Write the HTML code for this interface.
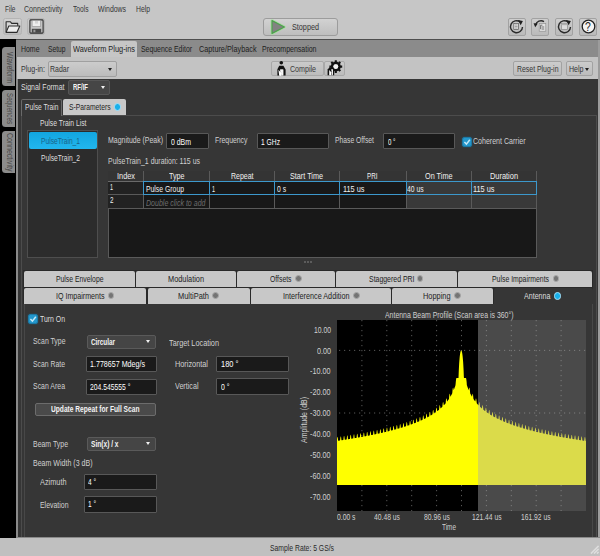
<!DOCTYPE html>
<html lang="en"><head><meta charset="utf-8"><title>Radar Plug-in</title>
<style>
html,body{margin:0;padding:0;background:#c6c6c6;}
body{width:600px;height:556px;position:relative;overflow:hidden;font-family:"Liberation Sans", sans-serif;}
.b{position:absolute;display:block;}
.t{position:absolute;white-space:nowrap;line-height:1;transform-origin:0 0;}
.arr{width:0;height:0;border-style:solid;border-width:3.2px 2.8px 0 2.8px;border-color:transparent;}
</style></head>
<body>
<div class="b" style="left:0px;top:0px;width:600px;height:39px;background:#c6c6c6;"></div>
<div class="b" style="left:0px;top:38.8px;width:16px;height:500.2px;background:#000;"></div>
<div class="b" style="left:16px;top:39px;width:584px;height:498.5px;background:#8a8a8a;"></div>
<div class="b" style="left:16px;top:38.8px;width:584px;height:1.4px;background:#4e4e4e;"></div>
<div class="b" style="left:16px;top:40px;width:582.5px;height:16.5px;background:#8b8b8b;border-radius:3px 0 0 0;"></div>
<div class="b" style="left:16.5px;top:56.5px;width:582px;height:22px;background:#c3c3c3;"></div>
<div class="b" style="left:17.8px;top:78.5px;width:580.4px;height:458.3px;background:#363636;"></div>
<div class="b" style="left:0px;top:537.5px;width:600px;height:18.5px;background:#c0c0c0;"></div>
<svg class="b" style="left:590px;top:545px" width="9" height="9" viewBox="0 0 9 9"><path d="M8.5 1L1 8.5M8.5 4L4 8.5M8.5 7L7 8.5" stroke="#dcdcdc" stroke-width="1.2"/></svg>
<div class="b" style="left:598.2px;top:40px;width:1.8px;height:497px;background:#9c9c9c;"></div>
<div class="b" style="left:3px;top:17.5px;width:18.5px;height:17.5px;background:linear-gradient(#d0d0d0,#bcbcbc);border:1px solid #b4b4b4;border-radius:2.5px;box-sizing:border-box;"></div>
<div class="b" style="left:27px;top:17.5px;width:18px;height:17.5px;background:linear-gradient(#d0d0d0,#bcbcbc);border:1px solid #b4b4b4;border-radius:2.5px;box-sizing:border-box;"></div>
<svg class="b" style="left:4.5px;top:19.5px" width="16" height="14" viewBox="0 0 16 14"><path d="M1.1 12V1.8h4.4l1.2 1.6h6v2.4" fill="#d6d6d6" stroke="#2c2c2c" stroke-width="1.1" stroke-linejoin="round"/><path d="M1.1 12.4l2.7-6.4h11l-2.9 6.4z" fill="#ececec" stroke="#2c2c2c" stroke-width="1.1" stroke-linejoin="round"/></svg>
<svg class="b" style="left:28.5px;top:19px" width="15" height="15" viewBox="0 0 15 15"><rect x="0.9" y="0.9" width="13.2" height="13.2" rx="0.8" fill="#c4c4c4" stroke="#2e2e2e" stroke-width="1.1"/><rect x="3.1" y="1.4" width="8.6" height="6.2" fill="#ededed" stroke="#8a8a8a" stroke-width="0.6"/><rect x="6" y="2" width="3" height="2.6" fill="#d4d4d4"/><rect x="2.8" y="9.8" width="9.4" height="4" fill="#4a4a4a"/><rect x="4.4" y="10.8" width="2" height="2.4" fill="#9a9a9a"/></svg>
<div class="b" style="left:263px;top:17.5px;width:75px;height:18px;background:linear-gradient(#d2d2d2,#bebebe);border:1px solid #9c9c9c;border-radius:3px;box-sizing:border-box;"></div>
<svg class="b" style="left:269px;top:19px" width="18" height="16" viewBox="0 0 18 16"><path d="M3 1.6L15.4 8L3 14.4z" fill="none" stroke="#a4e09c" stroke-width="3" stroke-linejoin="round" opacity="0.75"/><path d="M3 1.6L15.4 8L3 14.4z" fill="#828282" stroke="#4ea04e" stroke-width="1.2" stroke-linejoin="round"/></svg>
<div class="b" style="left:507.5px;top:17.5px;width:18px;height:18px;background:linear-gradient(#cecece,#bababa);border:1px solid #a2a2a2;border-radius:2px;box-sizing:border-box;"></div>
<svg class="b" style="left:509px;top:19px" width="15" height="15" viewBox="0 0 15 15"><path d="M11.1 2.9A6 6 0 1 0 13.5 7.9" fill="none" stroke="#2a2a2a" stroke-width="1.4"/><path d="M8.9 0.9l5 1.1-2.2 4.2z" fill="#1e1e1e"/><rect x="4.8" y="4.4" width="4.8" height="6.2" fill="#e6e6e6" stroke="#555" stroke-width="0.7"/><path d="M5.8 6h2.8M5.8 7.5h2.8M5.8 9h2.8" stroke="#777" stroke-width="0.6"/></svg>
<div class="b" style="left:531px;top:17.5px;width:18px;height:18px;background:linear-gradient(#cecece,#bababa);border:1px solid #a2a2a2;border-radius:2px;box-sizing:border-box;"></div>
<svg class="b" style="left:532.5px;top:19px" width="15" height="15" viewBox="0 0 15 15"><path d="M2.6 6.2A5.6 5.6 0 0 1 11 2.6" fill="none" stroke="#2a2a2a" stroke-width="1.4"/><path d="M0.6 4.2l4.2 0.4-2.6 3.6z" fill="#1e1e1e"/><rect x="6.2" y="4.6" width="6.6" height="7.6" fill="#e2e2e2" stroke="#8a8a8a" stroke-width="0.6"/><path d="M7.4 6.2h2M8.6 8h2.6M8.6 10h2.6M7.6 6.4v3.8" stroke="#444" stroke-width="0.7" fill="none"/></svg>
<div class="b" style="left:555px;top:17.5px;width:18px;height:18px;background:linear-gradient(#cecece,#bababa);border:1px solid #a2a2a2;border-radius:2px;box-sizing:border-box;"></div>
<svg class="b" style="left:556.5px;top:19px" width="15" height="15" viewBox="0 0 15 15"><path d="M11.1 2.9A6 6 0 1 0 13.5 7.9" fill="none" stroke="#2a2a2a" stroke-width="1.4"/><path d="M8.9 0.9l5 1.1-2.2 4.2z" fill="#1e1e1e"/><rect x="4.4" y="4.6" width="6" height="6" fill="#dcdcdc" stroke="#8a8a8a" stroke-width="0.7"/><rect x="4.4" y="4.6" width="6" height="1.6" fill="#b0b0b0"/></svg>
<div class="b" style="left:579px;top:17.5px;width:18px;height:18px;background:linear-gradient(#cecece,#bababa);border:1px solid #a2a2a2;border-radius:2px;box-sizing:border-box;"></div>
<svg class="b" style="left:580.5px;top:19px" width="15" height="15" viewBox="0 0 15 15"><circle cx="7.5" cy="7.5" r="6.3" fill="#f4f4f4" stroke="#222" stroke-width="1.3"/></svg>
<div class="b" style="left:71px;top:41px;width:66px;height:15.5px;background:#c6c6c6;border-radius:2px 2px 0 0;"></div>
<div class="b" style="left:47.5px;top:61px;width:69.5px;height:15.5px;background:linear-gradient(#cccccc,#bcbcbc);border:1px solid #a0a0a0;border-radius:2px;box-sizing:border-box;"></div>
<div class="b arr" style="left:107.5px;top:67.5px;border-top-color:#222"></div>
<div class="b" style="left:271px;top:60.5px;width:52.5px;height:15px;background:linear-gradient(#cacaca,#bcbcbc);border:1px solid #a8a8a8;border-radius:2px;box-sizing:border-box;"></div>
<div class="b" style="left:324px;top:60.5px;width:21px;height:15px;background:linear-gradient(#cacaca,#bcbcbc);border:1px solid #a8a8a8;border-radius:2px;box-sizing:border-box;"></div>
<svg class="b" style="left:275px;top:60px" width="13" height="16" viewBox="0 0 13 16"><circle cx="6.3" cy="2.7" r="1.8" fill="#111"/><path d="M2.4 15.4V9.2l1.8-3.4h4.2l2.2 3.6v6H8.4V9.4H5v6z" fill="#111"/><path d="M3.4 9.8l4.2 4.6-1.8 0.2 0.8 1.2H4.2z" fill="#fff"/><path d="M5.2 9.4h3v5.8h-1z" fill="#f4f4f4"/></svg>
<svg class="b" style="left:326px;top:60px" width="18" height="16" viewBox="0 0 18 16"><g transform="translate(9.8,6.6)"><circle r="3.7" fill="none" stroke="#111" stroke-width="2.5"/><g stroke="#111" stroke-width="2.1"><path d="M0-6.4V-4M0 6.4V4M-6.4 0H-4M6.4 0H4M-4.5-4.5L-2.9-2.9M4.5 4.5L2.9 2.9M-4.5 4.5L-2.9 2.9M4.5-4.5L2.9-2.9"/></g><circle r="2.4" fill="#f2f2f2"/></g><path d="M1.6 15.2V9.6l2-2.4 3.4 0.6 1.2 2.6v4.8z" fill="#111"/><path d="M3.2 15.2V10l3 3.2-1.2 0.2 0.8 1.8z" fill="#fff"/><path d="M5.2 9.2h1.8v6h-0.8z" fill="#eee"/></svg>
<div class="b" style="left:513px;top:61px;width:48.5px;height:15px;background:linear-gradient(#cccccc,#bcbcbc);border:1px solid #a2a2a2;border-radius:2px;box-sizing:border-box;"></div>
<div class="b" style="left:565.5px;top:61px;width:27px;height:15px;background:linear-gradient(#cccccc,#bcbcbc);border:1px solid #a2a2a2;border-radius:2px;box-sizing:border-box;"></div>
<div class="b arr" style="left:584.5px;top:67.5px;border-top-color:#222;border-width:3.4px 2.6px 0 2.6px"></div>
<div class="b" style="left:1.5px;top:47px;width:13px;height:38.7px;background:#8c8c8c;border-radius:3.5px 0 0 3.5px;"></div>
<div class="b" style="left:1.5px;top:90px;width:13px;height:36.7px;background:#8c8c8c;border-radius:3.5px 0 0 3.5px;"></div>
<div class="b" style="left:1.5px;top:130.6px;width:13px;height:42.2px;background:#8c8c8c;border-radius:3.5px 0 0 3.5px;"></div>
<div class="b" style="left:68px;top:79.5px;width:42px;height:15px;background:#464646;border:1px solid #565656;border-radius:2px;box-sizing:border-box;"></div>
<div class="b arr" style="left:100.5px;top:85.5px;border-top-color:#f0f0f0"></div>
<div class="b" style="left:20.5px;top:114.5px;width:576px;height:422.5px;border:1px solid #4c4c4c;box-sizing:border-box;border-bottom:none;"></div>
<div class="b" style="left:21px;top:99px;width:40.5px;height:16.5px;background:#363636;border:1px solid #6a6a6a;box-sizing:border-box;border-bottom:none;border-radius:2px 2px 0 0;"></div>
<div class="b" style="left:63px;top:99px;width:63px;height:15.5px;background:#c8c8c8;border-radius:2px 2px 0 0;"></div>
<div class="b" style="left:113.7px;top:103.2px;width:7.8px;height:7.8px;background:#19b0ea;border:1.2px solid #a8e0f8;border-radius:4px;box-sizing:border-box;"></div>
<div class="b" style="left:27.3px;top:129.5px;width:71px;height:128px;background:#2c2c2c;border:1px solid #4e4e4e;box-sizing:border-box;"></div>
<div class="b" style="left:28.5px;top:132px;width:68.5px;height:16.5px;background:linear-gradient(#12a6e0,#22b6ee);border-radius:2px;"></div>
<div class="b" style="left:166px;top:132.5px;width:42.5px;height:16.5px;background:#1a1a1a;border:1px solid #585858;border-radius:1px;box-sizing:border-box;"></div>
<div class="b" style="left:256.5px;top:132.5px;width:72.5px;height:16.5px;background:#1a1a1a;border:1px solid #585858;border-radius:1px;box-sizing:border-box;"></div>
<div class="b" style="left:383px;top:132.5px;width:71.5px;height:16.5px;background:#1a1a1a;border:1px solid #585858;border-radius:1px;box-sizing:border-box;"></div>
<div class="b" style="left:461.5px;top:136.5px;width:10.5px;height:10px;background:#2397cc;border:1px solid #1c7aa6;border-radius:2.5px;box-sizing:border-box;box-shadow:0 0 1.5px #1a6a90;"></div>
<svg class="b" style="left:462px;top:136.5px" width="10" height="10" viewBox="0 0 10 10"><path d="M2.4 5l2 2.1L7.8 2.8" fill="none" stroke="#c4e9f8" stroke-width="1.5"/></svg>
<div class="b" style="left:107.5px;top:170.5px;width:429px;height:87px;background:#181818;border:1px solid #5a5a5a;box-sizing:border-box;"></div>
<div class="b" style="left:108px;top:171px;width:428px;height:10px;background:#343434;"></div>
<div class="b" style="left:406px;top:181px;width:130px;height:26.5px;background:#393939;"></div>
<div class="b" style="left:108px;top:181px;width:35.5px;height:26.5px;background:#222222;"></div>
<div class="b" style="left:107.5px;top:207.5px;width:429px;height:1px;background:#5a5a5a;"></div>
<div class="b" style="left:107.5px;top:180.5px;width:429px;height:1px;background:#6a6a6a;"></div>
<div class="b" style="left:107.5px;top:193.5px;width:429px;height:1px;background:#5a5a5a;"></div>
<div class="b" style="left:143px;top:171px;width:1px;height:37px;background:#5a5a5a;"></div>
<div class="b" style="left:208.5px;top:171px;width:1px;height:37px;background:#5a5a5a;"></div>
<div class="b" style="left:274px;top:171px;width:1px;height:37px;background:#5a5a5a;"></div>
<div class="b" style="left:338.5px;top:171px;width:1px;height:37px;background:#5a5a5a;"></div>
<div class="b" style="left:405.5px;top:171px;width:1px;height:37px;background:#5a5a5a;"></div>
<div class="b" style="left:471px;top:171px;width:1px;height:37px;background:#5a5a5a;"></div>
<div class="b" style="left:143px;top:180.5px;width:66.5px;height:14px;border:1px solid #3c98cc;box-sizing:border-box;"></div>
<div class="b" style="left:208.5px;top:180.5px;width:66.5px;height:14px;border:1px solid #3c98cc;box-sizing:border-box;"></div>
<div class="b" style="left:274px;top:180.5px;width:65.5px;height:14px;border:1px solid #3c98cc;box-sizing:border-box;"></div>
<div class="b" style="left:338.5px;top:180.5px;width:68px;height:14px;border:1px solid #3c98cc;box-sizing:border-box;"></div>
<div class="b" style="left:405.5px;top:180.5px;width:66.5px;height:14px;border:1px solid #3c98cc;box-sizing:border-box;"></div>
<div class="b" style="left:471px;top:180.5px;width:66px;height:14px;border:1px solid #3c98cc;box-sizing:border-box;"></div>
<div class="b" style="left:304.3px;top:261.3px;width:1.4px;height:1.4px;background:#6a6a6a;border-radius:1px;"></div>
<div class="b" style="left:307.3px;top:261.3px;width:1.4px;height:1.4px;background:#6a6a6a;border-radius:1px;"></div>
<div class="b" style="left:310.3px;top:261.3px;width:1.4px;height:1.4px;background:#6a6a6a;border-radius:1px;"></div>
<div class="b" style="left:23px;top:270px;width:570px;height:34px;background:#2a2a2a;"></div>
<div class="b" style="left:24px;top:270.7px;width:110.5px;height:16.3px;background:#c8c8c8;border-radius:2px 2px 0 0;"></div>
<div class="b" style="left:136px;top:270.7px;width:99.5px;height:16.3px;background:#c8c8c8;border-radius:2px 2px 0 0;"></div>
<div class="b" style="left:237px;top:270.7px;width:97.5px;height:16.3px;background:#c8c8c8;border-radius:2px 2px 0 0;"></div>
<div class="b" style="left:294.9px;top:275.2px;width:6.8px;height:6.8px;background:#747474;border:1px solid #a8a8a8;border-radius:4px;box-sizing:border-box;"></div>
<div class="b" style="left:336px;top:270.7px;width:120.5px;height:16.3px;background:#c8c8c8;border-radius:2px 2px 0 0;"></div>
<div class="b" style="left:416.6px;top:275.2px;width:6.8px;height:6.8px;background:#747474;border:1px solid #a8a8a8;border-radius:4px;box-sizing:border-box;"></div>
<div class="b" style="left:458px;top:270.7px;width:134px;height:16.3px;background:#c8c8c8;border-radius:2px 2px 0 0;"></div>
<div class="b" style="left:552.6px;top:275.2px;width:6.8px;height:6.8px;background:#747474;border:1px solid #a8a8a8;border-radius:4px;box-sizing:border-box;"></div>
<div class="b" style="left:24px;top:288px;width:122px;height:15.7px;background:#c8c8c8;border-radius:2px 2px 0 0;"></div>
<div class="b" style="left:107.6px;top:292.3px;width:6.8px;height:6.8px;background:#747474;border:1px solid #a8a8a8;border-radius:4px;box-sizing:border-box;"></div>
<div class="b" style="left:147.5px;top:288px;width:102px;height:15.7px;background:#c8c8c8;border-radius:2px 2px 0 0;"></div>
<div class="b" style="left:212.3px;top:292.3px;width:6.8px;height:6.8px;background:#747474;border:1px solid #a8a8a8;border-radius:4px;box-sizing:border-box;"></div>
<div class="b" style="left:251px;top:288px;width:139.5px;height:15.7px;background:#c8c8c8;border-radius:2px 2px 0 0;"></div>
<div class="b" style="left:353.1px;top:292.3px;width:6.8px;height:6.8px;background:#747474;border:1px solid #a8a8a8;border-radius:4px;box-sizing:border-box;"></div>
<div class="b" style="left:392px;top:288px;width:101px;height:15.7px;background:#c8c8c8;border-radius:2px 2px 0 0;"></div>
<div class="b" style="left:454.1px;top:292.3px;width:6.8px;height:6.8px;background:#747474;border:1px solid #a8a8a8;border-radius:4px;box-sizing:border-box;"></div>
<div class="b" style="left:493.5px;top:288px;width:99px;height:17px;background:#363636;border-radius:2px 2px 0 0;"></div>
<div class="b" style="left:553.7px;top:292.2px;width:7.8px;height:7.8px;background:#19b0ea;border:1.2px solid #a8e0f8;border-radius:4px;box-sizing:border-box;"></div>
<div class="b" style="left:24px;top:304px;width:1px;height:232.8px;background:#484848;"></div>
<div class="b" style="left:591.5px;top:304px;width:1.2px;height:232.8px;background:#484848;"></div>
<div class="b" style="left:27.5px;top:313.5px;width:10.5px;height:10px;background:#2397cc;border:1px solid #1c7aa6;border-radius:2.5px;box-sizing:border-box;box-shadow:0 0 1.5px #1a6a90;"></div>
<svg class="b" style="left:28px;top:313.5px" width="10" height="10" viewBox="0 0 10 10"><path d="M2.4 5l2 2.1L7.8 2.8" fill="none" stroke="#c4e9f8" stroke-width="1.5"/></svg>
<div class="b" style="left:86.5px;top:334.5px;width:69.5px;height:14px;background:#454545;border:1px solid #5a5a5a;border-radius:2px;box-sizing:border-box;"></div>
<div class="b arr" style="left:146px;top:340.3px;border-top-color:#f0f0f0"></div>
<div class="b" style="left:86px;top:356px;width:70.5px;height:15.5px;background:#1a1a1a;border:1px solid #585858;border-radius:1px;box-sizing:border-box;"></div>
<div class="b" style="left:86px;top:378.5px;width:70.5px;height:16px;background:#1a1a1a;border:1px solid #585858;border-radius:1px;box-sizing:border-box;"></div>
<div class="b" style="left:35px;top:403px;width:121px;height:13px;background:#4a4a4a;border:1px solid #6c6c6c;border-radius:2px;box-sizing:border-box;"></div>
<div class="b" style="left:86.5px;top:436.5px;width:69.5px;height:14px;background:#454545;border:1px solid #5a5a5a;border-radius:2px;box-sizing:border-box;"></div>
<div class="b arr" style="left:146px;top:442.3px;border-top-color:#f0f0f0"></div>
<div class="b" style="left:84px;top:473.5px;width:72.5px;height:16px;background:#1a1a1a;border:1px solid #585858;border-radius:1px;box-sizing:border-box;"></div>
<div class="b" style="left:84px;top:495.5px;width:72.5px;height:17px;background:#1a1a1a;border:1px solid #585858;border-radius:1px;box-sizing:border-box;"></div>
<div class="b" style="left:216px;top:355.5px;width:73px;height:16.5px;background:#1a1a1a;border:1px solid #585858;border-radius:1px;box-sizing:border-box;"></div>
<div class="b" style="left:216px;top:378px;width:73px;height:16.5px;background:#1a1a1a;border:1px solid #585858;border-radius:1px;box-sizing:border-box;"></div>
<svg class="b" style="left:337px;top:320.4px" width="249" height="191.10000000000002" viewBox="337 320.4 249 191.10000000000002"><rect x="337" y="320.4" width="249" height="191.10000000000002" fill="#000"/><path d="M361.90 320.4V511.5M386.80 320.4V511.5M411.70 320.4V511.5M436.60 320.4V511.5M461.50 320.4V511.5M486.40 320.4V511.5M511.30 320.4V511.5M536.20 320.4V511.5M561.10 320.4V511.5M339 350.80H586M339 413.41H586M339 476.02H586" stroke="#585858" stroke-width="1" stroke-dasharray="1.2 3.8" fill="none"/><polygon points="337,485.3 337.00,439.03 337.17,437.96 337.33,437.38 337.50,437.26 337.67,437.61 337.83,438.43 338.00,439.78 338.17,441.19 338.33,441.17 338.50,441.14 338.67,441.12 338.83,441.09 339.00,441.07 339.17,441.04 339.33,441.02 339.50,440.99 339.67,440.97 339.83,440.94 340.00,440.92 340.17,439.80 340.33,438.29 340.50,437.32 340.67,436.83 340.83,436.81 341.00,437.24 341.17,438.16 341.33,439.63 341.50,440.69 341.67,440.67 341.83,440.64 342.00,440.62 342.17,440.59 342.33,440.57 342.50,440.54 342.67,440.52 342.83,440.49 343.00,440.46 343.17,440.44 343.33,440.41 343.50,438.95 343.67,437.55 343.83,436.68 344.00,436.29 344.17,436.35 344.33,436.88 344.50,437.90 344.67,439.48 344.83,440.18 345.00,440.15 345.17,440.13 345.33,440.10 345.50,440.08 345.67,440.05 345.83,440.02 346.00,440.00 346.17,439.97 346.33,439.95 346.50,439.92 346.67,439.89 346.83,438.11 347.00,436.82 347.17,436.05 347.33,435.74 347.50,435.90 347.67,436.53 347.83,437.65 348.00,439.35 348.17,439.65 348.33,439.63 348.50,439.60 348.67,439.57 348.83,439.55 349.00,439.52 349.17,439.49 349.33,439.47 349.50,439.44 349.67,439.41 349.83,439.38 350.00,439.03 350.17,437.28 350.33,436.09 350.50,435.42 350.67,435.21 350.83,435.45 351.00,436.17 351.17,437.41 351.33,439.14 351.50,439.11 351.67,439.08 351.83,439.06 352.00,439.03 352.17,439.00 352.33,438.97 352.50,438.95 352.67,438.92 352.83,438.89 353.00,438.86 353.17,438.83 353.33,438.08 353.50,436.45 353.67,435.37 353.83,434.79 354.00,434.67 354.17,435.01 354.33,435.83 354.50,437.17 354.67,438.58 354.83,438.55 355.00,438.52 355.17,438.50 355.33,438.47 355.50,438.44 355.67,438.41 355.83,438.38 356.00,438.35 356.17,438.32 356.33,438.29 356.50,438.27 356.67,437.14 356.83,435.63 357.00,434.65 357.17,434.16 357.33,434.13 357.50,434.57 357.67,435.48 357.83,436.94 358.00,438.00 358.17,437.97 358.33,437.95 358.50,437.92 358.67,437.89 358.83,437.86 359.00,437.83 359.17,437.80 359.33,437.77 359.50,437.74 359.67,437.71 359.83,437.68 360.00,436.21 360.17,434.81 360.33,433.93 360.50,433.54 360.67,433.60 360.83,434.12 361.00,435.14 361.17,436.72 361.33,437.41 361.50,437.38 361.67,437.35 361.83,437.32 362.00,437.29 362.17,437.26 362.33,437.23 362.50,437.20 362.67,437.17 362.83,437.13 363.00,437.10 363.17,437.07 363.33,435.28 363.50,433.99 363.67,433.21 363.83,432.91 364.00,433.06 364.17,433.68 364.33,434.80 364.50,436.50 364.67,436.79 364.83,436.76 365.00,436.73 365.17,436.70 365.33,436.67 365.50,436.64 365.67,436.60 365.83,436.57 366.00,436.54 366.17,436.51 366.33,436.48 366.50,436.12 366.67,434.36 366.83,433.17 367.00,432.49 367.17,432.28 367.33,432.52 367.50,433.23 367.67,434.46 367.83,436.19 368.00,436.16 368.17,436.12 368.33,436.09 368.50,436.06 368.67,436.03 368.83,435.99 369.00,435.96 369.17,435.93 369.33,435.90 369.50,435.86 369.67,435.83 369.83,435.07 370.00,433.44 370.17,432.35 370.33,431.76 370.50,431.64 370.67,431.97 370.83,432.79 371.00,434.13 371.17,435.53 371.33,435.50 371.50,435.46 371.67,435.43 371.83,435.40 372.00,435.36 372.17,435.33 372.33,435.29 372.50,435.26 372.67,435.23 372.83,435.19 373.00,435.16 373.17,434.03 373.33,432.51 373.50,431.53 373.67,431.03 373.83,431.00 374.00,431.42 374.17,432.34 374.33,433.79 374.50,434.85 374.67,434.81 374.83,434.78 375.00,434.74 375.17,434.71 375.33,434.67 375.50,434.64 375.67,434.60 375.83,434.57 376.00,434.53 376.17,434.49 376.33,434.46 376.50,432.99 376.67,431.58 376.83,430.70 377.00,430.29 377.17,430.35 377.33,430.87 377.50,431.88 377.67,433.45 377.83,434.14 378.00,434.10 378.17,434.06 378.33,434.03 378.50,433.99 378.67,433.95 378.83,433.92 379.00,433.88 379.17,433.84 379.33,433.81 379.50,433.77 379.67,433.73 379.83,431.94 380.00,430.64 380.17,429.85 380.33,429.54 380.50,429.69 380.67,430.30 380.83,431.42 381.00,433.11 381.17,433.40 381.33,433.36 381.50,433.32 381.67,433.28 381.83,433.24 382.00,433.21 382.17,433.17 382.33,433.13 382.50,433.09 382.67,433.05 382.83,433.01 383.00,432.65 383.17,430.88 383.33,429.69 383.50,429.00 383.67,428.78 383.83,429.01 384.00,429.72 384.17,430.95 384.33,432.66 384.50,432.62 384.67,432.59 384.83,432.55 385.00,432.51 385.17,432.47 385.33,432.43 385.50,432.39 385.67,432.35 385.83,432.31 386.00,432.27 386.17,432.23 386.33,431.46 386.50,429.82 386.67,428.73 386.83,428.13 387.00,428.00 387.17,428.33 387.33,429.13 387.50,430.46 387.67,431.86 387.83,431.82 388.00,431.78 388.17,431.74 388.33,431.70 388.50,431.65 388.67,431.61 388.83,431.57 389.00,431.53 389.17,431.49 389.33,431.44 389.50,431.40 389.67,430.27 389.83,428.74 390.00,427.75 390.17,427.25 390.33,427.20 390.50,427.62 390.67,428.53 390.83,429.97 391.00,431.02 391.17,430.98 391.33,430.93 391.50,430.89 391.67,430.85 391.83,430.80 392.00,430.76 392.17,430.72 392.33,430.67 392.50,430.63 392.67,430.58 392.83,430.54 393.00,429.06 393.17,427.64 393.33,426.75 393.50,426.34 393.67,426.38 393.83,426.90 394.00,427.90 394.17,429.46 394.33,430.14 394.50,430.09 394.67,430.05 394.83,430.00 395.00,429.96 395.17,429.91 395.33,429.86 395.50,429.82 395.67,429.77 395.83,429.73 396.00,429.68 396.17,429.63 396.33,427.83 396.50,426.52 396.67,425.73 396.83,425.40 397.00,425.54 397.17,426.14 397.33,427.25 397.50,428.93 397.67,429.21 397.83,429.16 398.00,429.12 398.17,429.07 398.33,429.02 398.50,428.97 398.67,428.92 398.83,428.87 399.00,428.83 399.17,428.78 399.33,428.73 399.50,428.35 399.67,426.58 399.83,425.37 400.00,424.67 400.17,424.44 400.33,424.67 400.50,425.36 400.67,426.58 400.83,428.28 401.00,428.23 401.17,428.18 401.33,428.13 401.50,428.08 401.67,428.03 401.83,427.98 402.00,427.93 402.17,427.88 402.33,427.83 402.50,427.78 402.67,427.72 402.83,426.95 403.00,425.29 403.17,424.19 403.33,423.58 403.50,423.44 403.67,423.76 403.83,424.55 404.00,425.87 404.17,427.25 404.33,427.20 404.50,427.15 404.67,427.09 404.83,427.04 405.00,426.99 405.17,426.93 405.33,426.88 405.50,426.83 405.67,426.77 405.83,426.72 406.00,426.66 406.17,425.51 406.33,423.97 406.50,422.97 406.67,422.45 406.83,422.40 407.00,422.80 407.17,423.69 407.33,425.13 407.50,426.16 407.67,426.11 407.83,426.05 408.00,425.99 408.17,425.94 408.33,425.88 408.50,425.82 408.67,425.76 408.83,425.71 409.00,425.65 409.17,425.59 409.33,425.53 409.50,424.04 409.67,422.61 409.83,421.70 410.00,421.27 410.17,421.31 410.33,421.80 410.50,422.79 410.67,424.34 410.83,425.00 411.00,424.94 411.17,424.88 411.33,424.82 411.50,424.76 411.67,424.70 411.83,424.64 412.00,424.58 412.17,424.51 412.33,424.45 412.50,424.39 412.67,424.33 412.83,422.51 413.00,421.18 413.17,420.37 413.33,420.04 413.50,420.16 413.67,420.74 413.83,421.83 414.00,423.50 414.17,423.76 414.33,423.70 414.50,423.63 414.67,423.57 414.83,423.50 415.00,423.44 415.17,423.37 415.33,423.30 415.50,423.24 415.67,423.17 415.83,423.11 416.00,422.71 416.17,420.92 416.33,419.70 416.50,418.98 416.67,418.73 416.83,418.93 417.00,419.61 417.17,420.81 417.33,422.50 417.50,422.43 417.67,422.36 417.83,422.29 418.00,422.22 418.17,422.15 418.33,422.08 418.50,422.01 418.67,421.94 418.83,421.87 419.00,421.79 419.17,421.72 419.33,420.93 419.50,419.25 419.67,418.13 419.83,417.50 420.00,417.33 420.17,417.63 420.33,418.40 420.50,419.70 420.67,421.06 420.83,420.99 421.00,420.91 421.17,420.84 421.33,420.76 421.50,420.69 421.67,420.61 421.83,420.53 422.00,420.46 422.17,420.38 422.33,420.30 422.50,420.22 422.67,419.05 422.83,417.49 423.00,416.46 423.17,415.92 423.33,415.84 423.50,416.22 423.67,417.09 423.83,418.50 424.00,419.51 424.17,419.43 424.33,419.34 424.50,419.26 424.67,419.18 424.83,419.10 425.00,419.01 425.17,418.93 425.33,418.85 425.50,418.76 425.67,418.68 425.83,418.59 426.00,417.07 426.17,415.61 426.33,414.68 426.50,414.22 426.67,414.23 426.83,414.69 427.00,415.66 427.17,417.17 427.33,417.81 427.50,417.72 427.67,417.63 427.83,417.54 428.00,417.45 428.17,417.35 428.33,417.26 428.50,417.17 428.67,417.08 428.83,416.98 429.00,416.89 429.17,416.80 429.33,414.94 429.50,413.59 429.67,412.74 429.83,412.37 430.00,412.46 430.17,413.01 430.33,414.07 430.50,415.70 430.67,415.93 430.83,415.83 431.00,415.73 431.17,415.63 431.33,415.53 431.50,415.43 431.67,415.32 431.83,415.22 432.00,415.12 432.17,415.01 432.33,414.91 432.50,414.48 432.67,412.65 432.83,411.38 433.00,410.63 433.17,410.34 433.33,410.50 433.50,411.14 433.67,412.30 433.83,413.94 434.00,413.83 434.17,413.72 434.33,413.61 434.50,413.50 434.67,413.38 434.83,413.27 435.00,413.15 435.17,413.04 435.33,412.92 435.50,412.80 435.67,412.69 435.83,411.84 436.00,410.12 436.17,408.95 436.33,408.27 436.50,408.06 436.67,408.31 436.83,409.03 437.00,410.28 437.17,411.59 437.33,411.46 437.50,411.34 437.67,411.21 437.83,411.08 438.00,410.95 438.17,410.82 438.33,410.69 438.50,410.55 438.67,410.42 438.83,410.29 439.00,410.15 439.17,408.92 439.33,407.30 439.50,406.21 439.67,405.61 439.83,405.47 440.00,405.79 440.17,406.59 440.33,407.93 440.50,408.88 440.67,408.74 440.83,408.59 441.00,408.44 441.17,408.29 441.33,408.14 441.50,407.98 441.67,407.83 441.83,407.67 442.00,407.52 442.17,407.36 442.33,407.20 442.50,405.60 442.67,404.07 442.83,403.06 443.00,402.52 443.17,402.45 443.33,402.84 443.50,403.72 443.67,405.15 443.83,405.70 444.00,405.52 444.17,405.35 444.33,405.17 444.50,404.99 444.67,404.81 444.83,404.62 445.00,404.44 445.17,404.25 445.33,404.06 445.50,403.87 445.67,403.68 445.83,401.72 446.00,400.26 446.17,399.32 446.33,398.84 446.50,398.82 446.67,399.26 446.83,400.21 447.00,401.72 447.17,401.84 447.33,401.62 447.50,401.40 447.67,401.18 447.83,400.95 448.00,400.73 448.17,400.50 448.33,400.26 448.50,400.03 448.67,399.79 448.83,399.54 449.00,398.97 449.17,396.99 449.33,395.59 449.50,394.68 449.67,394.24 449.83,394.25 450.00,394.73 450.17,395.72 450.33,397.20 450.50,396.92 450.67,396.64 450.83,396.35 451.00,396.05 451.17,395.75 451.33,395.45 451.50,395.14 451.67,394.83 451.83,394.51 452.00,394.18 452.17,393.85 452.33,392.79 452.50,390.84 452.67,389.44 452.83,388.53 453.00,388.07 453.17,388.07 453.33,388.53 453.50,389.52 453.67,390.56 453.83,390.15 454.00,389.74 454.17,389.31 454.33,388.88 454.50,388.43 454.67,387.98 454.83,387.51 455.00,387.03 455.17,386.53 455.33,386.03 455.50,385.50 455.67,383.87 455.83,381.83 456.00,380.31 456.17,379.26 456.33,378.65 456.50,378.48 456.67,378.50 456.83,378.50 457.00,378.50 457.17,378.50 457.33,378.50 457.50,378.50 457.67,378.50 457.83,378.50 458.00,378.50 458.17,378.50 458.33,378.50 458.50,378.50 458.67,374.11 458.83,370.12 459.00,366.81 459.17,364.01 459.33,361.61 459.50,359.55 459.67,357.77 459.83,356.24 460.00,354.93 460.17,353.82 460.33,352.91 460.50,352.16 460.67,351.59 460.83,351.17 461.00,350.91 461.17,350.80 461.33,350.85 461.50,351.05 461.67,351.40 461.83,351.91 462.00,352.59 462.17,353.44 462.33,354.46 462.50,355.69 462.67,357.13 462.83,358.80 463.00,360.75 463.17,363.01 463.33,365.63 463.50,368.72 463.67,372.41 463.83,376.94 464.00,378.50 464.17,378.50 464.33,378.50 464.50,378.50 464.67,378.50 464.83,378.50 465.00,378.50 465.17,378.50 465.33,378.50 465.50,378.50 465.67,378.50 465.83,378.50 466.00,378.53 466.17,378.96 466.33,379.84 466.50,381.16 466.67,382.99 466.83,385.29 467.00,385.82 467.17,386.33 467.33,386.83 467.50,387.32 467.67,387.79 467.83,388.25 468.00,388.70 468.17,389.14 468.33,389.57 468.50,389.99 468.67,390.40 468.83,390.07 469.00,388.86 469.17,388.20 469.33,388.01 469.50,388.29 469.67,389.02 469.83,390.22 470.00,391.94 470.17,393.72 470.33,394.05 470.50,394.38 470.67,394.70 470.83,395.02 471.00,395.33 471.17,395.63 471.33,395.93 471.50,396.23 471.67,396.52 471.83,396.81 472.00,397.09 472.17,396.27 472.33,395.06 472.50,394.38 472.67,394.19 472.83,394.45 473.00,395.17 473.17,396.37 473.33,398.11 473.50,399.45 473.67,399.69 473.83,399.93 474.00,400.17 474.17,400.40 474.33,400.63 474.50,400.86 474.67,401.09 474.83,401.31 475.00,401.53 475.17,401.75 475.33,401.96 475.50,400.74 475.67,399.58 475.83,398.94 476.00,398.78 476.17,399.07 476.33,399.83 476.50,401.07 476.67,402.88 476.83,403.79 477.00,403.99 477.17,404.18 477.33,404.36 477.50,404.55 477.67,404.73 477.83,404.92 478.00,405.10 478.17,405.28 478.33,405.45 478.50,405.63 478.67,405.80 478.83,404.22 479.00,403.13 479.17,402.55 479.33,402.44 479.50,402.79 479.67,403.60 479.83,404.92 480.00,406.81 480.17,407.30 480.33,407.46 480.50,407.61 480.67,407.77 480.83,407.92 481.00,408.08 481.17,408.23 481.33,408.38 481.50,408.53 481.67,408.68 481.83,408.82 482.00,408.64 482.17,407.06 482.33,406.05 482.50,405.54 482.67,405.50 482.83,405.91 483.00,406.80 483.17,408.20 483.33,410.10 483.50,410.23 483.67,410.37 483.83,410.50 484.00,410.63 484.17,410.77 484.33,410.90 484.50,411.03 484.67,411.16 484.83,411.28 485.00,411.41 485.17,411.54 485.33,410.94 485.50,409.46 485.67,408.53 485.83,408.10 486.00,408.13 486.17,408.62 486.33,409.59 486.50,411.08 486.67,412.64 486.83,412.76 487.00,412.87 487.17,412.99 487.33,413.11 487.50,413.22 487.67,413.34 487.83,413.45 488.00,413.56 488.17,413.68 488.33,413.79 488.50,413.90 488.67,412.92 488.83,411.54 489.00,410.70 489.17,410.35 489.33,410.46 489.50,411.02 489.67,412.08 489.83,413.67 490.00,414.87 490.17,414.97 490.33,415.08 490.50,415.18 490.67,415.28 490.83,415.39 491.00,415.49 491.17,415.59 491.33,415.69 491.50,415.79 491.67,415.89 491.83,415.99 492.00,414.65 492.17,413.37 492.33,412.62 492.50,412.35 492.67,412.54 492.83,413.19 493.00,414.34 493.17,416.04 493.33,416.85 493.50,416.95 493.67,417.04 493.83,417.13 494.00,417.23 494.17,417.32 494.33,417.41 494.50,417.50 494.67,417.59 494.83,417.68 495.00,417.77 495.17,417.86 495.33,416.19 495.50,415.02 495.67,414.36 495.83,414.17 496.00,414.44 496.17,415.18 496.33,416.42 496.50,418.23 496.67,418.64 496.83,418.73 497.00,418.81 497.17,418.90 497.33,418.98 497.50,419.06 497.67,419.15 497.83,419.23 498.00,419.31 498.17,419.39 498.33,419.48 498.50,419.23 498.67,417.58 498.83,416.51 499.00,415.94 499.17,415.83 499.33,416.19 499.50,417.02 499.67,418.36 499.83,420.19 500.00,420.27 500.17,420.35 500.33,420.43 500.50,420.50 500.67,420.58 500.83,420.66 501.00,420.73 501.17,420.81 501.33,420.88 501.50,420.96 501.67,421.03 501.83,420.38 502.00,418.85 502.17,417.88 502.33,417.40 502.50,417.38 502.67,417.82 502.83,418.74 503.00,420.18 503.17,421.69 503.33,421.77 503.50,421.84 503.67,421.91 503.83,421.98 504.00,422.05 504.17,422.12 504.33,422.19 504.50,422.26 504.67,422.33 504.83,422.40 505.00,422.47 505.17,421.44 505.33,420.03 505.50,419.15 505.67,418.75 505.83,418.82 506.00,419.35 506.17,420.37 506.33,421.92 506.50,423.08 506.67,423.15 506.83,423.21 507.00,423.28 507.17,423.34 507.33,423.41 507.50,423.47 507.67,423.54 507.83,423.60 508.00,423.67 508.17,423.73 508.33,423.80 508.50,422.42 508.67,421.12 508.83,420.33 509.00,420.03 509.17,420.18 509.33,420.80 509.50,421.91 509.67,423.58 509.83,424.37 510.00,424.43 510.17,424.49 510.33,424.55 510.50,424.61 510.67,424.67 510.83,424.73 511.00,424.80 511.17,424.86 511.33,424.92 511.50,424.98 511.67,425.04 511.83,423.34 512.00,422.14 512.17,421.45 512.33,421.23 512.50,421.47 512.67,422.18 512.83,423.40 513.00,425.18 513.17,425.57 513.33,425.63 513.50,425.68 513.67,425.74 513.83,425.80 514.00,425.86 514.17,425.91 514.33,425.97 514.50,426.03 514.67,426.08 514.83,426.14 515.00,425.87 515.17,424.20 515.33,423.10 515.50,422.50 515.67,422.38 515.83,422.71 516.00,423.51 516.17,424.83 516.33,426.64 516.50,426.69 516.67,426.75 516.83,426.80 517.00,426.86 517.17,426.91 517.33,426.97 517.50,427.02 517.67,427.07 517.83,427.13 518.00,427.18 518.17,427.23 518.33,426.56 518.50,425.01 518.67,424.01 518.83,423.51 519.00,423.47 519.17,423.89 519.33,424.79 519.50,426.21 519.67,427.70 519.83,427.76 520.00,427.81 520.17,427.86 520.33,427.91 520.50,427.96 520.67,428.01 520.83,428.06 521.00,428.11 521.17,428.16 521.33,428.21 521.50,428.26 521.67,427.22 521.83,425.78 522.00,424.89 522.17,424.48 522.33,424.52 522.50,425.04 522.67,426.03 522.83,427.57 523.00,428.71 523.17,428.76 523.33,428.81 523.50,428.86 523.67,428.90 523.83,428.95 524.00,429.00 524.17,429.05 524.33,429.10 524.50,429.14 524.67,429.19 524.83,429.24 525.00,427.85 525.17,426.52 525.33,425.72 525.50,425.40 525.67,425.54 525.83,426.14 526.00,427.24 526.17,428.89 526.33,429.66 526.50,429.71 526.67,429.75 526.83,429.80 527.00,429.85 527.17,429.89 527.33,429.94 527.50,429.98 527.67,430.03 527.83,430.07 528.00,430.12 528.17,430.16 528.33,428.45 528.50,427.24 528.67,426.53 528.83,426.30 529.00,426.53 529.17,427.22 529.33,428.42 529.50,430.19 529.67,430.57 529.83,430.61 530.00,430.65 530.17,430.70 530.33,430.74 530.50,430.79 530.67,430.83 530.83,430.87 531.00,430.92 531.17,430.96 531.33,431.00 531.50,430.72 531.67,429.03 531.83,427.92 532.00,427.31 532.17,427.17 532.33,427.49 532.50,428.28 532.67,429.59 532.83,431.39 533.00,431.43 533.17,431.47 533.33,431.51 533.50,431.55 533.67,431.60 533.83,431.64 534.00,431.68 534.17,431.72 534.33,431.76 534.50,431.80 534.67,431.84 534.83,431.16 535.00,429.60 535.17,428.59 535.33,428.07 535.50,428.02 535.67,428.43 535.83,429.32 536.00,430.73 536.17,432.21 536.33,432.25 536.50,432.29 536.67,432.33 536.83,432.37 537.00,432.41 537.17,432.45 537.33,432.49 537.50,432.53 537.67,432.57 537.83,432.61 538.00,432.65 538.17,431.59 538.33,430.15 538.50,429.24 538.67,428.82 538.83,428.86 539.00,429.36 539.17,430.34 539.33,431.87 539.50,433.00 539.67,433.04 539.83,433.08 540.00,433.11 540.17,433.15 540.33,433.19 540.50,433.23 540.67,433.27 540.83,433.30 541.00,433.34 541.17,433.38 541.33,433.42 541.50,432.02 541.67,430.68 541.83,429.87 542.00,429.54 542.17,429.67 542.33,430.27 542.50,431.35 542.67,432.99 542.83,433.75 543.00,433.79 543.17,433.83 543.33,433.87 543.50,433.90 543.67,433.94 543.83,433.98 544.00,434.01 544.17,434.05 544.33,434.08 544.50,434.12 544.67,434.16 544.83,432.44 545.00,431.21 545.17,430.50 545.33,430.26 545.50,430.48 545.67,431.16 545.83,432.35 546.00,434.12 546.17,434.48 546.33,434.52 546.50,434.55 546.67,434.59 546.83,434.62 547.00,434.66 547.17,434.69 547.33,434.73 547.50,434.76 547.67,434.80 547.83,434.83 548.00,434.54 548.17,432.85 548.33,431.73 548.50,431.11 548.67,430.96 548.83,431.27 549.00,432.06 549.17,433.35 549.33,435.14 549.50,435.18 549.67,435.21 549.83,435.25 550.00,435.28 550.17,435.31 550.33,435.35 550.50,435.38 550.67,435.42 550.83,435.45 551.00,435.48 551.17,435.52 551.33,434.83 551.50,433.26 551.67,432.24 551.83,431.72 552.00,431.66 552.17,432.06 552.33,432.94 552.50,434.35 552.67,435.82 552.83,435.85 553.00,435.88 553.17,435.92 553.33,435.95 553.50,435.98 553.67,436.01 553.83,436.05 554.00,436.08 554.17,436.11 554.33,436.14 554.50,436.18 554.67,435.12 554.83,433.66 555.00,432.75 555.17,432.32 555.33,432.35 555.50,432.84 555.67,433.82 555.83,435.34 556.00,436.47 556.17,436.50 556.33,436.53 556.50,436.56 556.67,436.59 556.83,436.62 557.00,436.66 557.17,436.69 557.33,436.72 557.50,436.75 557.67,436.78 557.83,436.81 558.00,435.41 558.17,434.06 558.33,433.25 558.50,432.91 558.67,433.04 558.83,433.62 559.00,434.70 559.17,436.34 559.33,437.09 559.50,437.12 559.67,437.15 559.83,437.18 560.00,437.21 560.17,437.24 560.33,437.28 560.50,437.31 560.67,437.34 560.83,437.37 561.00,437.40 561.17,437.43 561.33,435.70 561.50,434.47 561.67,433.75 561.83,433.50 562.00,433.72 562.17,434.40 562.33,435.58 562.50,437.34 562.67,437.70 562.83,437.73 563.00,437.76 563.17,437.79 563.33,437.82 563.50,437.85 563.67,437.88 563.83,437.90 564.00,437.93 564.17,437.96 564.33,437.99 564.50,437.69 564.67,436.00 564.83,434.87 565.00,434.25 565.17,434.10 565.33,434.40 565.50,435.18 565.67,436.47 565.83,438.25 566.00,438.28 566.17,438.31 566.33,438.34 566.50,438.37 566.67,438.40 566.83,438.43 567.00,438.46 567.17,438.48 567.33,438.51 567.50,438.54 567.67,438.57 567.83,437.87 568.00,436.30 568.17,435.28 568.33,434.75 568.50,434.69 568.67,435.08 568.83,435.96 569.00,437.36 569.17,438.82 569.33,438.85 569.50,438.88 569.67,438.91 569.83,438.93 570.00,438.96 570.17,438.99 570.33,439.02 570.50,439.05 570.67,439.07 570.83,439.10 571.00,439.13 571.17,438.06 571.33,436.60 571.50,435.68 571.67,435.25 571.83,435.28 572.00,435.77 572.17,436.74 572.33,438.25 572.50,439.37 572.67,439.40 572.83,439.43 573.00,439.46 573.17,439.48 573.33,439.51 573.50,439.54 573.67,439.56 573.83,439.59 574.00,439.62 574.17,439.64 574.33,439.67 574.50,438.26 574.67,436.91 574.83,436.09 575.00,435.75 575.17,435.87 575.33,436.45 575.50,437.53 575.67,439.16 575.83,439.91 576.00,439.94 576.17,439.96 576.33,439.99 576.50,440.01 576.67,440.04 576.83,440.07 577.00,440.09 577.17,440.12 577.33,440.14 577.50,440.17 577.67,440.20 577.83,438.46 578.00,437.23 578.17,436.51 578.33,436.26 578.50,436.47 578.67,437.14 578.83,438.32 579.00,440.08 579.17,440.43 579.33,440.45 579.50,440.48 579.67,440.51 579.83,440.53 580.00,440.56 580.17,440.58 580.33,440.61 580.50,440.63 580.67,440.66 580.83,440.68 581.00,440.38 581.17,438.68 581.33,437.55 581.50,436.92 581.67,436.77 581.83,437.07 582.00,437.84 582.17,439.13 582.33,440.91 582.50,440.93 582.67,440.96 582.83,440.98 583.00,441.01 583.17,441.03 583.33,441.06 583.50,441.08 583.67,441.11 583.83,441.13 584.00,441.16 584.17,441.18 584.33,440.48 584.50,438.90 584.67,437.88 584.83,437.35 585.00,437.28 585.17,437.67 585.33,438.54 585.50,439.94 585.67,441.40 585.83,441.43 586.00,441.45 586,485.3" fill="#ffff00"/><rect x="478" y="320.4" width="108" height="191.10000000000002" fill="rgba(172,172,172,0.43)"/></svg>
<svg class="b" style="left:590px;top:545px" width="9" height="9" viewBox="0 0 9 9"><path d="M8.5 1L1 8.5M8.5 4L4 8.5M8.5 7L7 8.5" stroke="#dcdcdc" stroke-width="1.2"/></svg>
<span class="t" style="left:4.5px;top:5.10px;font-size:8.6px;color:#363636;transform:scaleX(0.758);">File</span>
<span class="t" style="left:24px;top:5.10px;font-size:8.6px;color:#363636;transform:scaleX(0.822);">Connectivity</span>
<span class="t" style="left:72.5px;top:5.10px;font-size:8.6px;color:#363636;transform:scaleX(0.773);">Tools</span>
<span class="t" style="left:98px;top:5.10px;font-size:8.6px;color:#363636;transform:scaleX(0.803);">Windows</span>
<span class="t" style="left:136px;top:5.10px;font-size:8.6px;color:#363636;transform:scaleX(0.792);">Help</span>
<span class="t" style="left:291.5px;top:23.10px;font-size:8.6px;color:#363636;transform:scaleX(0.843);">Stopped</span>
<span class="t" style="left:585.1px;top:21.05px;font-size:12.5px;color:#1c1c1c;transform:scaleX(0.834);">?</span>
<span class="t" style="left:20.5px;top:44.70px;font-size:8.6px;color:#1e1e1e;transform:scaleX(0.807);">Home</span>
<span class="t" style="left:48px;top:44.70px;font-size:8.6px;color:#1e1e1e;transform:scaleX(0.779);">Setup</span>
<span class="t" style="left:73px;top:44.70px;font-size:8.6px;color:#1e1e1e;transform:scaleX(0.858);">Waveform Plug-ins</span>
<span class="t" style="left:140.5px;top:44.70px;font-size:8.6px;color:#1e1e1e;transform:scaleX(0.803);">Sequence Editor</span>
<span class="t" style="left:199px;top:44.70px;font-size:8.6px;color:#1e1e1e;transform:scaleX(0.848);">Capture/Playback</span>
<span class="t" style="left:262px;top:44.70px;font-size:8.6px;color:#1e1e1e;transform:scaleX(0.815);">Precompensation</span>
<span class="t" style="left:20.5px;top:65.10px;font-size:8.6px;color:#363636;transform:scaleX(0.824);">Plug-in:</span>
<span class="t" style="left:50px;top:65.10px;font-size:8.6px;color:#363636;transform:scaleX(0.812);">Radar</span>
<span class="t" style="left:290px;top:65.10px;font-size:8.6px;color:#3a3a3a;transform:scaleX(0.825);">Compile</span>
<span class="t" style="left:516.5px;top:65.10px;font-size:8.6px;color:#363636;transform:scaleX(0.804);">Reset Plug-in</span>
<span class="t" style="left:568.5px;top:65.10px;font-size:8.6px;color:#363636;transform:scaleX(0.820);">Help</span>
<span class="t" style="left:12.60px;top:52px;font-size:8.2px;color:#484848;transform:rotate(90deg) scaleX(0.838);">Waveform</span>
<span class="t" style="left:12.60px;top:92.5px;font-size:8.2px;color:#484848;transform:rotate(90deg) scaleX(0.756);">Sequences</span>
<span class="t" style="left:12.60px;top:132.5px;font-size:8.2px;color:#484848;transform:rotate(90deg) scaleX(0.863);">Connectivity</span>
<span class="t" style="left:20.5px;top:83.10px;font-size:8.6px;color:#dedede;transform:scaleX(0.813);">Signal Format</span>
<span class="t" style="left:72.5px;top:83.10px;font-size:8.6px;color:#f4f4f4;transform:scaleX(0.698);font-weight:bold;">RF/IF</span>
<span class="t" style="left:25px;top:103.10px;font-size:8.6px;color:#dedede;transform:scaleX(0.779);">Pulse Train</span>
<span class="t" style="left:68.5px;top:103.10px;font-size:8.6px;color:#1c1c1c;transform:scaleX(0.783);">S-Parameters</span>
<span class="t" style="left:39.5px;top:119.10px;font-size:8.6px;color:#dedede;transform:scaleX(0.791);">Pulse Train List</span>
<span class="t" style="left:41px;top:136.60px;font-size:8.6px;color:#1a6488;transform:scaleX(0.775);">PulseTrain_1</span>
<span class="t" style="left:41px;top:154.10px;font-size:8.6px;color:#dedede;transform:scaleX(0.775);">PulseTrain_2</span>
<span class="t" style="left:108px;top:135.60px;font-size:8.6px;color:#d0d0d0;transform:scaleX(0.811);">Magnitude (Peak)</span>
<span class="t" style="left:170.5px;top:137.60px;font-size:8.6px;color:#fff;transform:scaleX(0.805);">0 dBm</span>
<span class="t" style="left:215px;top:135.60px;font-size:8.6px;color:#d0d0d0;transform:scaleX(0.800);">Frequency</span>
<span class="t" style="left:261px;top:137.60px;font-size:8.6px;color:#fff;transform:scaleX(0.780);">1 GHz</span>
<span class="t" style="left:335px;top:135.60px;font-size:8.6px;color:#d0d0d0;transform:scaleX(0.787);">Phase Offset</span>
<span class="t" style="left:387.5px;top:137.60px;font-size:8.6px;color:#fff;transform:scaleX(0.707);">0 °</span>
<span class="t" style="left:472.5px;top:137.10px;font-size:8.6px;color:#d0d0d0;transform:scaleX(0.820);">Coherent Carrier</span>
<span class="t" style="left:108px;top:156.60px;font-size:8.6px;color:#d0d0d0;transform:scaleX(0.809);">PulseTrain_1 duration: 115 us</span>
<span class="t" style="left:116.5px;top:172.10px;font-size:8.6px;color:#f0f0f0;transform:scaleX(0.856);">Index</span>
<span class="t" style="left:168.5px;top:172.10px;font-size:8.6px;color:#f0f0f0;transform:scaleX(0.832);">Type</span>
<span class="t" style="left:230.5px;top:172.10px;font-size:8.6px;color:#f0f0f0;transform:scaleX(0.812);">Repeat</span>
<span class="t" style="left:290.25px;top:172.10px;font-size:8.6px;color:#f0f0f0;transform:scaleX(0.842);">Start Time</span>
<span class="t" style="left:367.25px;top:172.10px;font-size:8.6px;color:#f0f0f0;transform:scaleX(0.733);">PRI</span>
<span class="t" style="left:425px;top:172.10px;font-size:8.6px;color:#f0f0f0;transform:scaleX(0.847);">On Time</span>
<span class="t" style="left:490px;top:172.10px;font-size:8.6px;color:#f0f0f0;transform:scaleX(0.862);">Duration</span>
<span class="t" style="left:110px;top:182.60px;font-size:8.6px;color:#f0f0f0;transform:scaleX(0.627);">1</span>
<span class="t" style="left:110px;top:196.10px;font-size:8.6px;color:#f0f0f0;transform:scaleX(0.732);">2</span>
<span class="t" style="left:145.5px;top:184.60px;font-size:8.6px;color:#f0f0f0;transform:scaleX(0.795);">Pulse Group</span>
<span class="t" style="left:211.5px;top:184.60px;font-size:8.6px;color:#f0f0f0;transform:scaleX(0.627);">1</span>
<span class="t" style="left:277px;top:184.60px;font-size:8.6px;color:#f0f0f0;transform:scaleX(0.785);">0 s</span>
<span class="t" style="left:342.5px;top:184.60px;font-size:8.6px;color:#f0f0f0;transform:scaleX(0.854);">115 us</span>
<span class="t" style="left:406.5px;top:184.60px;font-size:8.6px;color:#f0f0f0;transform:scaleX(0.785);">40 us</span>
<span class="t" style="left:472.5px;top:184.60px;font-size:8.6px;color:#f0f0f0;transform:scaleX(0.854);">115 us</span>
<span class="t" style="left:145.5px;top:198.60px;font-size:8.6px;color:#6c6c6c;transform:scaleX(0.819);font-style:italic;">Double click to add</span>
<span class="t" style="left:55.5px;top:274.80px;font-size:8.6px;color:#222;transform:scaleX(0.795);">Pulse Envelope</span>
<span class="t" style="left:167.5px;top:274.80px;font-size:8.6px;color:#222;transform:scaleX(0.856);">Modulation</span>
<span class="t" style="left:270px;top:274.80px;font-size:8.6px;color:#222;transform:scaleX(0.794);">Offsets</span>
<span class="t" style="left:368.5px;top:274.80px;font-size:8.6px;color:#222;transform:scaleX(0.807);">Staggered PRI</span>
<span class="t" style="left:491.5px;top:274.80px;font-size:8.6px;color:#222;transform:scaleX(0.801);">Pulse Impairments</span>
<span class="t" style="left:55.5px;top:291.90px;font-size:8.6px;color:#222;transform:scaleX(0.826);">IQ Impairments</span>
<span class="t" style="left:178.3px;top:291.90px;font-size:8.6px;color:#222;transform:scaleX(0.865);">MultiPath</span>
<span class="t" style="left:282.5px;top:291.90px;font-size:8.6px;color:#222;transform:scaleX(0.843);">Interference Addition</span>
<span class="t" style="left:422.5px;top:291.90px;font-size:8.6px;color:#222;transform:scaleX(0.859);">Hopping</span>
<span class="t" style="left:523.5px;top:292.10px;font-size:8.6px;color:#dedede;transform:scaleX(0.827);">Antenna</span>
<span class="t" style="left:40px;top:314.60px;font-size:8.6px;color:#dedede;transform:scaleX(0.801);">Turn On</span>
<span class="t" style="left:33px;top:337.10px;font-size:8.6px;color:#d0d0d0;transform:scaleX(0.803);">Scan Type</span>
<span class="t" style="left:91px;top:337.80px;font-size:8.6px;color:#f4f4f4;transform:scaleX(0.739);font-weight:bold;">Circular</span>
<span class="t" style="left:33px;top:359.80px;font-size:8.6px;color:#d0d0d0;transform:scaleX(0.797);">Scan Rate</span>
<span class="t" style="left:90px;top:360.15px;font-size:8.6px;color:#fff;transform:scaleX(0.828);">1.778657 Mdeg/s</span>
<span class="t" style="left:33px;top:382.10px;font-size:8.6px;color:#d0d0d0;transform:scaleX(0.807);">Scan Area</span>
<span class="t" style="left:90px;top:382.90px;font-size:8.6px;color:#fff;transform:scaleX(0.790);">204.545555 °</span>
<span class="t" style="left:51px;top:405.40px;font-size:8.6px;color:#f4f4f4;transform:scaleX(0.772);font-weight:bold;">Update Repeat for Full Scan</span>
<span class="t" style="left:33px;top:439.80px;font-size:8.6px;color:#d0d0d0;transform:scaleX(0.808);">Beam Type</span>
<span class="t" style="left:91px;top:439.80px;font-size:8.6px;color:#f4f4f4;transform:scaleX(0.768);font-weight:bold;">Sin(x) / x</span>
<span class="t" style="left:33px;top:459.10px;font-size:8.6px;color:#d0d0d0;transform:scaleX(0.820);">Beam Width (3 dB)</span>
<span class="t" style="left:40px;top:478.10px;font-size:8.6px;color:#d0d0d0;transform:scaleX(0.854);">Azimuth</span>
<span class="t" style="left:87.5px;top:477.90px;font-size:8.6px;color:#fff;transform:scaleX(0.754);">4 °</span>
<span class="t" style="left:40px;top:500.60px;font-size:8.6px;color:#d0d0d0;transform:scaleX(0.806);">Elevation</span>
<span class="t" style="left:87.5px;top:500.40px;font-size:8.6px;color:#fff;transform:scaleX(0.754);">1 °</span>
<span class="t" style="left:168.5px;top:339.10px;font-size:8.6px;color:#d0d0d0;transform:scaleX(0.851);">Target Location</span>
<span class="t" style="left:175px;top:360.10px;font-size:8.6px;color:#d0d0d0;transform:scaleX(0.853);">Horizontal</span>
<span class="t" style="left:220.5px;top:360.15px;font-size:8.6px;color:#fff;transform:scaleX(0.868);">180 °</span>
<span class="t" style="left:175px;top:382.10px;font-size:8.6px;color:#d0d0d0;transform:scaleX(0.834);">Vertical</span>
<span class="t" style="left:220.5px;top:382.65px;font-size:8.6px;color:#fff;transform:scaleX(0.801);">0 °</span>
<span class="t" style="left:385px;top:311.10px;font-size:8.6px;color:#d0d0d0;transform:scaleX(0.805);">Antenna Beam Profile (Scan area is 360°)</span>
<span class="t" style="left:313.5px;top:326.73px;font-size:8.2px;color:#d0d0d0;transform:scaleX(0.829);">10.00</span>
<span class="t" style="left:316.5px;top:347.60px;font-size:8.2px;color:#d0d0d0;transform:scaleX(0.878);">0.00</span>
<span class="t" style="left:310px;top:368.47px;font-size:8.2px;color:#d0d0d0;transform:scaleX(0.883);">-10.00</span>
<span class="t" style="left:310px;top:389.34px;font-size:8.2px;color:#d0d0d0;transform:scaleX(0.883);">-20.00</span>
<span class="t" style="left:310px;top:410.21px;font-size:8.2px;color:#d0d0d0;transform:scaleX(0.883);">-30.00</span>
<span class="t" style="left:310px;top:431.08px;font-size:8.2px;color:#d0d0d0;transform:scaleX(0.883);">-40.00</span>
<span class="t" style="left:310px;top:451.95px;font-size:8.2px;color:#d0d0d0;transform:scaleX(0.883);">-50.00</span>
<span class="t" style="left:310px;top:472.82px;font-size:8.2px;color:#d0d0d0;transform:scaleX(0.883);">-60.00</span>
<span class="t" style="left:310px;top:493.69px;font-size:8.2px;color:#d0d0d0;transform:scaleX(0.883);">-70.00</span>
<span class="t" style="left:336.75px;top:514.10px;font-size:8.2px;color:#d0d0d0;transform:scaleX(0.829);">0.00 s</span>
<span class="t" style="left:373.8px;top:514.10px;font-size:8.2px;color:#d0d0d0;transform:scaleX(0.827);">40.48 us</span>
<span class="t" style="left:423.6px;top:514.10px;font-size:8.2px;color:#d0d0d0;transform:scaleX(0.827);">80.96 us</span>
<span class="t" style="left:471.65px;top:514.10px;font-size:8.2px;color:#d0d0d0;transform:scaleX(0.820);">121.44 us</span>
<span class="t" style="left:521.45px;top:514.10px;font-size:8.2px;color:#d0d0d0;transform:scaleX(0.820);">161.92 us</span>
<span class="t" style="left:442px;top:523.80px;font-size:8.2px;color:#d0d0d0;transform:scaleX(0.783);">Time</span>
<span class="t" style="left:301.20px;top:443px;font-size:8.2px;color:#d0d0d0;transform:rotate(-90deg) scaleX(0.849);">Amplitude (dB)</span>
<span class="t" style="left:270px;top:543.60px;font-size:8.6px;color:#2a2a2a;transform:scaleX(0.793);">Sample Rate: 5 GS/s</span>
</body></html>
